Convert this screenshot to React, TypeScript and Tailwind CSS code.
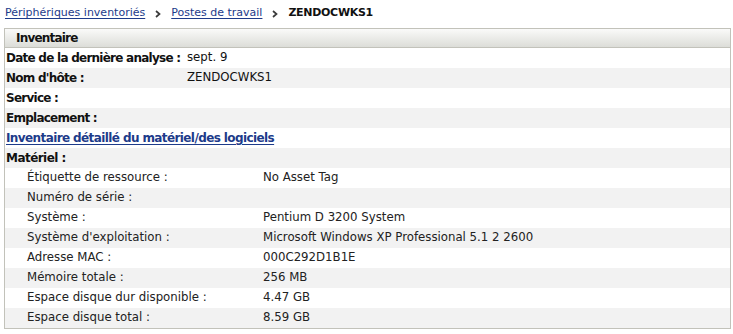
const font = { fontFamily: "'DejaVu Sans', Verdana, sans-serif" };

type Row = { label: string; value?: string };

const general: Row[] = [
  { label: "Date de la dernière analyse :", value: "sept. 9" },
  { label: "Nom d'hôte :", value: "ZENDOCWKS1" },
  { label: "Service :" },
  { label: "Emplacement :" },
];

const hardware: Row[] = [
  { label: "Étiquette de ressource :", value: "No Asset Tag" },
  { label: "Numéro de série :" },
  { label: "Système :", value: "Pentium D 3200 System" },
  { label: "Système d'exploitation :", value: "Microsoft Windows XP Professional 5.1 2 2600" },
  { label: "Adresse MAC :", value: "000C292D1B1E" },
  { label: "Mémoire totale :", value: "256 MB" },
  { label: "Espace disque dur disponible :", value: "4.47 GB" },
  { label: "Espace disque total :", value: "8.59 GB" },
];

function stripe(i: number) {
  return i % 2 === 0 ? "bg-white" : "bg-[#f2f2f2]";
}

function Chevron() {
  return (
    <svg className="mt-px shrink-0" width="6" height="8" viewBox="0 0 6 8" fill="none">
      <path d="M1 1 L4.5 4 L1 7" stroke="#3a3a3a" strokeWidth="1.7" />
    </svg>
  );
}

export default function App() {
  return (
    <div className="h-[334px] w-[733px] bg-white text-[11.75px] text-[#111]" style={font}>
      <div className="flex h-[28px] items-center gap-[10px] pb-px pl-[5px] text-[11px]">
        <a className="text-[#1d3b8a] underline underline-offset-2" href="#">
          Périphériques inventoriés
        </a>
        <Chevron />
        <a className="text-[#1d3b8a] underline underline-offset-2" href="#">
          Postes de travail
        </a>
        <Chevron />
        <span className="font-bold tracking-[-0.3px]">ZENDOCWKS1</span>
      </div>

      <div className="ml-[4px] w-[727px] border border-[#c2c2ba]">
        <div className="flex h-[19px] items-center border-b border-[#c2c2ba] bg-gradient-to-b from-[#fafaf9] to-[#dcddd8] pl-[11px] text-[12px] font-bold tracking-[-0.8px]">
          Inventaire
        </div>

        {general.map((row, i) => (
          <div className={`flex h-5 items-center pl-px ${stripe(i)}`} key={row.label}>
            <span className="w-[181px] shrink-0 whitespace-nowrap text-[12px] font-bold tracking-[-0.75px]">
              {row.label}
            </span>
            <span>{row.value}</span>
          </div>
        ))}

        <div className="flex h-5 items-center bg-white pl-px">
          <a
            className="text-[12px] font-bold tracking-[-0.6px] text-[#1d3b8a] underline underline-offset-2"
            href="#"
          >
            Inventaire détaillé du matériel/des logiciels
          </a>
        </div>
        <div className="flex h-5 items-center bg-[#f2f2f2] pl-px text-[12px] font-bold tracking-[-0.55px]">
          Matériel :
        </div>

        {hardware.map((row, i) => (
          <div className={`flex h-5 items-center pl-[22px] text-[#222] ${stripe(i)}`} key={row.label}>
            <span className="w-[236px] shrink-0">{row.label}</span>
            <span>{row.value}</span>
          </div>
        ))}
      </div>
    </div>
  );
}
